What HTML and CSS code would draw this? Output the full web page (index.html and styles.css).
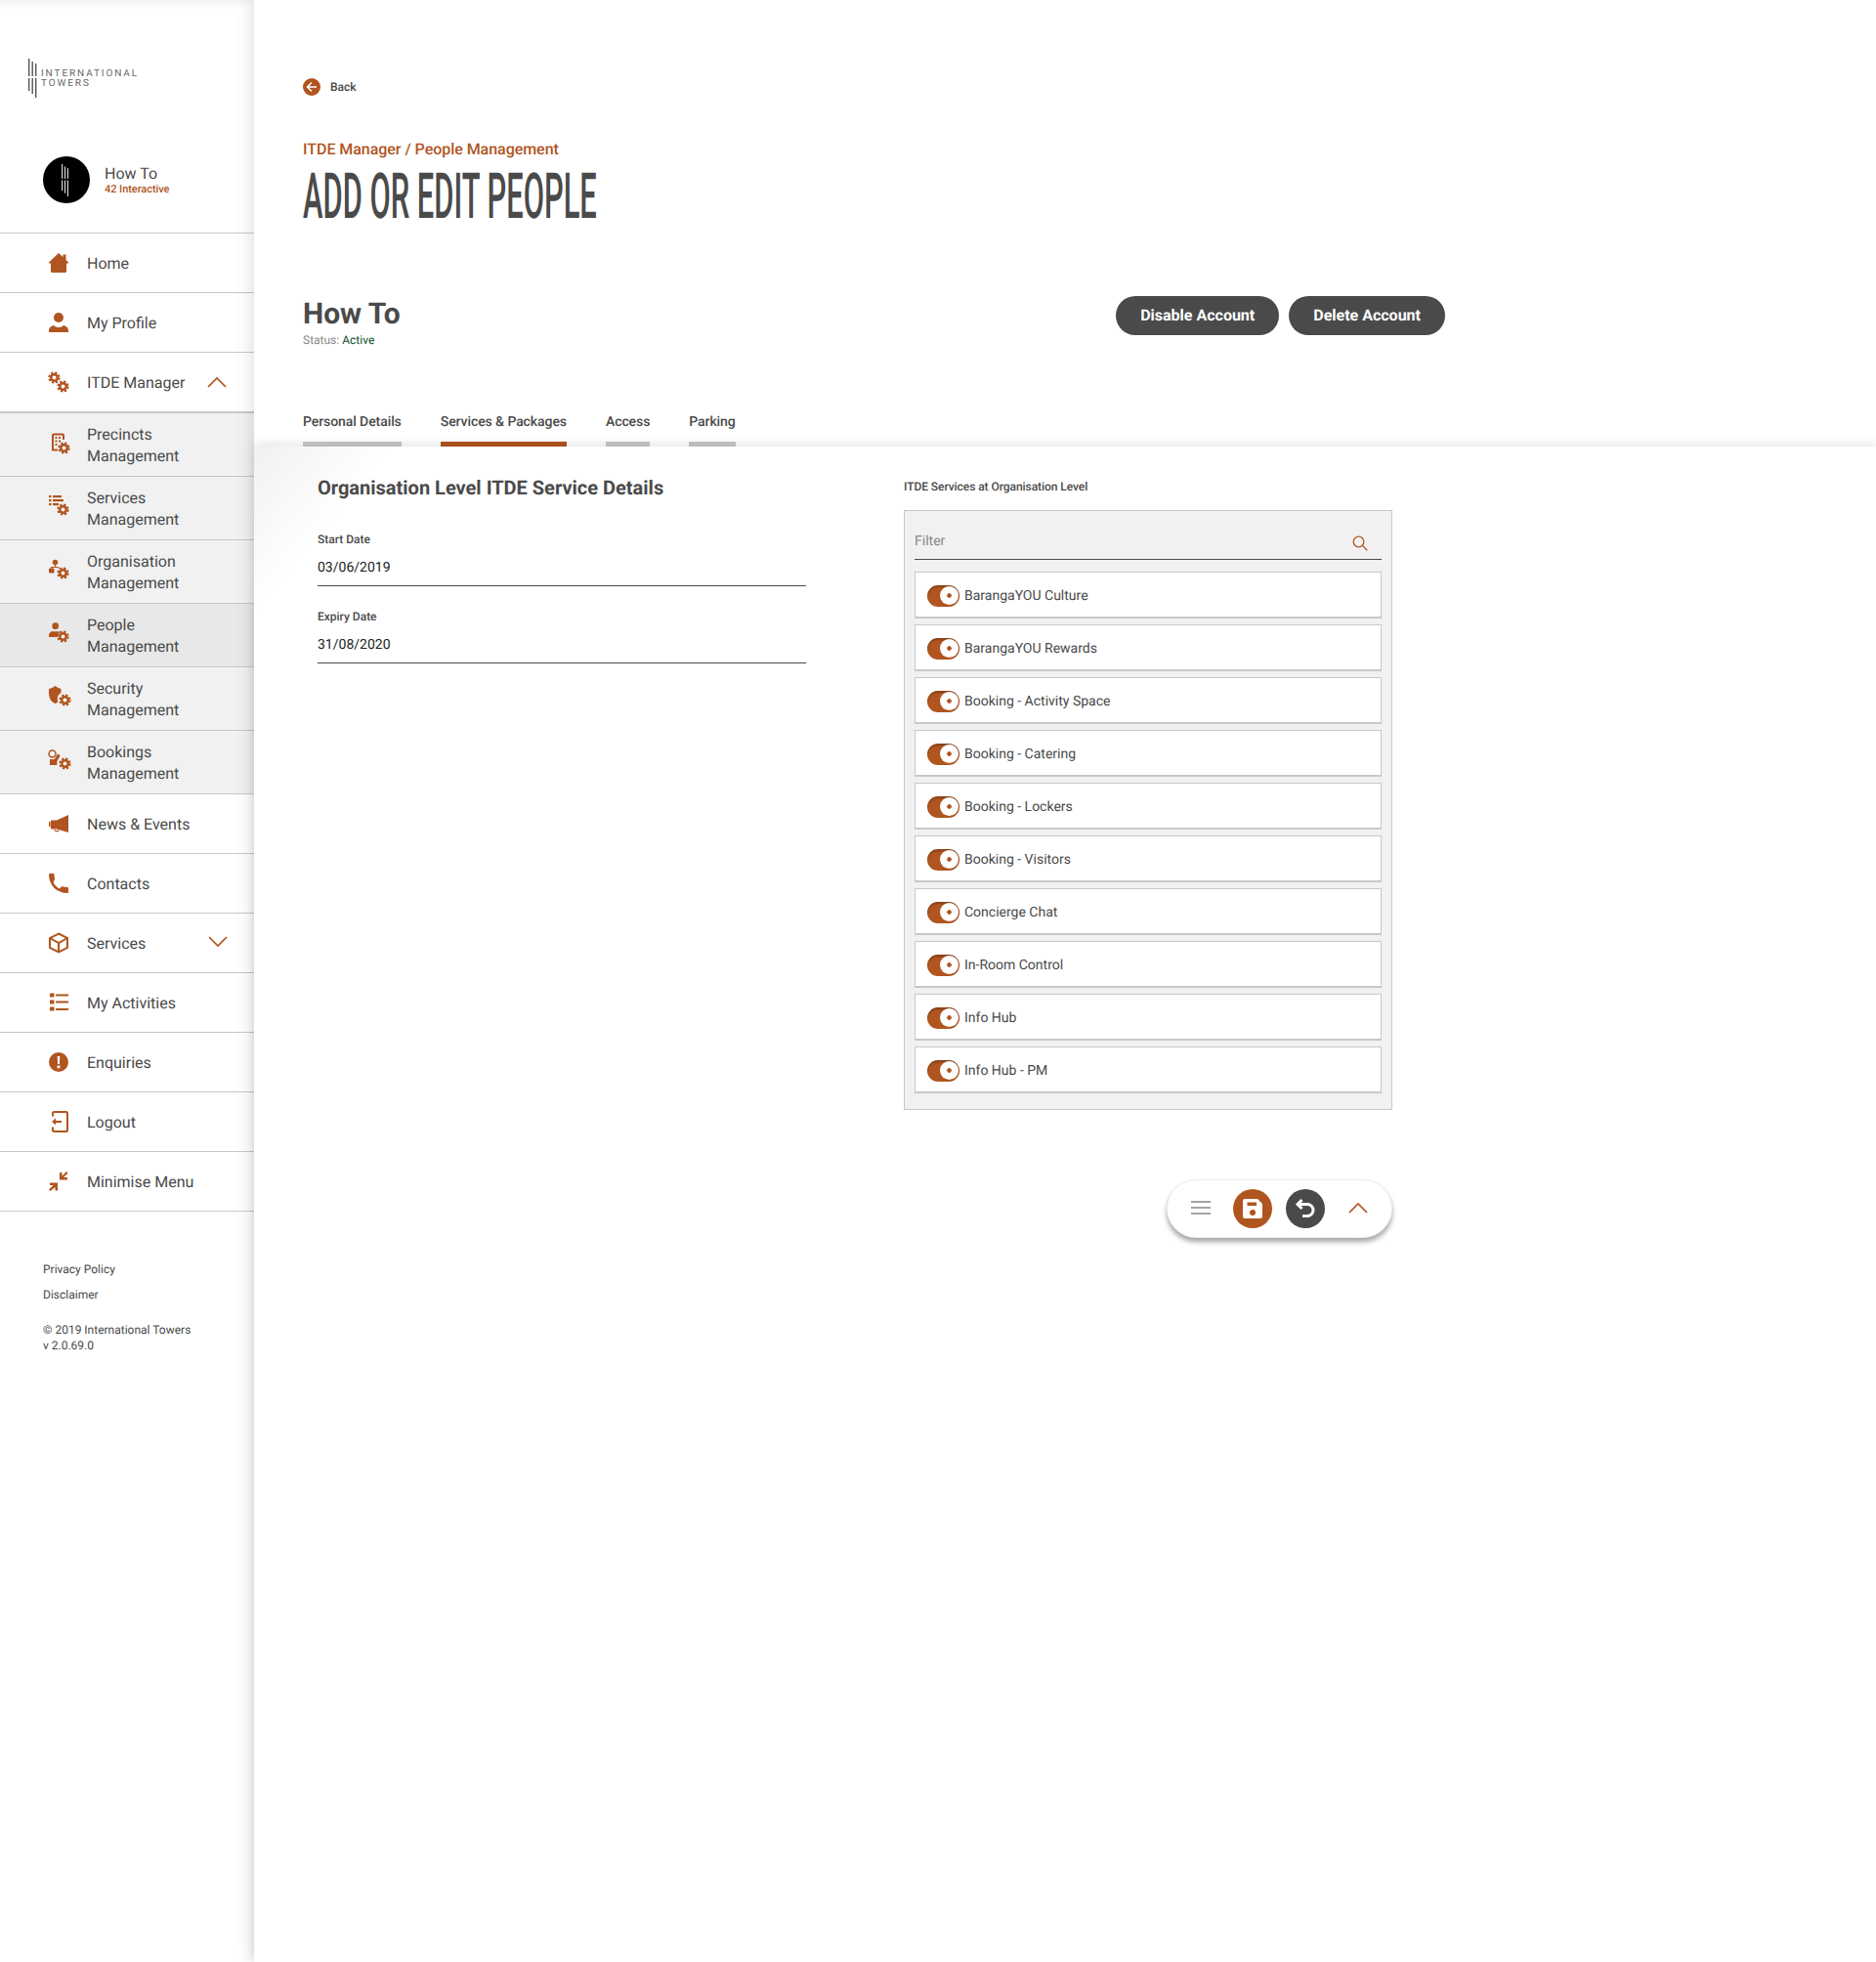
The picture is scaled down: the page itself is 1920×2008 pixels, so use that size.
FILE: index.html
```html
<!DOCTYPE html>
<html lang="en">
<head>
<meta charset="utf-8">
<title>Add or Edit People</title>
<link rel="stylesheet" href="styles.css">
</head>
<body>
<svg class="defs" width="0" height="0" aria-hidden="true">
  <symbol id="gear" viewBox="0 0 16 16">
    <circle cx="8" cy="8" r="4" fill="none" stroke="currentColor" stroke-width="3"/>
    <circle cx="8" cy="8" r="6.2" fill="none" stroke="currentColor" stroke-width="2.6" stroke-dasharray="2.9 1.97"/>
  </symbol>
  <symbol id="bars" viewBox="0 0 12 40">
    <rect x="0" y="0" width="1.4" height="18"/><rect x="0" y="20" width="1.4" height="13"/>
    <rect x="3.5" y="3" width="1.4" height="15"/><rect x="3.5" y="20" width="1.4" height="16"/>
    <rect x="7" y="5" width="1.4" height="13"/><rect x="7" y="20" width="1.4" height="20"/>
  </symbol>
</svg>
<div class="page">
  <aside class="sidebar">
    <header class="brand">
      <div class="logo">
        <svg class="logo-bars" viewBox="0 0 12 40"><use href="#bars"/></svg>
        <div class="logo-text"><span>INTERNATIONAL</span><span>TOWERS</span></div>
      </div>
      <div class="user">
        <div class="avatar"><svg class="avatar-bars" viewBox="0 0 12 40"><use href="#bars"/></svg></div>
        <div><div class="user-name">How To</div><div class="user-org">42 Interactive</div></div>
      </div>
    </header>
    <nav>
      <a class="row"><svg class="ic" viewBox="0 0 24 24"><path d="M12 2l4.500 4V3.500h3V9l2.500 2.500v1h-2v8a1.500 1.500 0 0 1-1.500 1.500h-13A1.500 1.500 0 0 1 4 20.500v-8H2v-1z"/></svg><span>Home</span></a>
      <a class="row"><svg class="ic" viewBox="0 0 24 24"><circle cx="12" cy="7" r="5"/><path d="M2 22v-1.500c0-3 2.500-5 5-5.500 1.500 1.500 3 2 5 2s3.500-.5 5-2c2.500.5 5 2.500 5 5.500V22z"/></svg><span>My Profile</span></a>
      <a class="row row-open"><svg class="ic" viewBox="0 0 24 24"><use href="#gear" x="1" y="1" width="13" height="13"/><use href="#gear" x="10" y="10" width="13" height="13"/></svg><span>ITDE Manager</span><svg class="chev" viewBox="0 0 20 12"><path d="M1 11l9-9 9 9"/></svg></a>
      <div class="sub">
        <a class="subrow"><svg class="ic" viewBox="0 0 24 24"><path class="line" d="M11 18.500H6V3.500a1 1 0 0 1 1-1h9a1 1 0 0 1 1 1V8"/><path d="M8.500 5h2v2h-2zM12 5h2v2h-2zM8.500 8.500h2v2h-2zM12 8.500h2v2h-2zM8.500 12h2v2h-2z"/><use href="#gear" x="11" y="10" width="13" height="13"/></svg><span>Precincts<br>Management</span></a>
        <a class="subrow"><svg class="ic" viewBox="0 0 24 24"><path d="M2 0h2.500v2.200H2zM6 0h9v2.200H6zM2 4h2.500v2.200H2zM6 4h11v2.200H6zM2 8h2.500v2.200H2zM6 8h6v2.200H6z"/><use href="#gear" x="10" y="8" width="13" height="13"/></svg><span>Services<br>Management</span></a>
        <a class="subrow"><svg class="ic" viewBox="0 0 24 24"><circle cx="8.500" cy="3.500" r="2.800"/><rect x="2" y="9.500" width="5.500" height="5" rx="1"/><path class="thin" d="M8.500 6v2.500M4.500 9.500v-1h7l1 1.500"/><use href="#gear" x="10" y="8" width="13" height="13"/></svg><span>Organisation<br>Management</span></a>
        <a class="subrow"><svg class="ic" viewBox="0 0 24 24"><circle cx="8.700" cy="3.700" r="3.400"/><path d="M2 15v-2c0-2 2-3.800 3.500-3.800h6c.8 0 1.500.2 2 .6a7 7 0 0 0-2.500 5.200z"/><use href="#gear" x="10" y="8" width="13" height="13"/></svg><span>People<br>Management</span></a>
        <a class="subrow"><svg class="ic" viewBox="0 0 24 24"><path d="M2 3c2.500-.5 4.500-1.500 6.500-3 2 1.500 4 2.500 6 3v4a7 7 0 0 0-3 9.500c-.8.600-1.800 1-3 1.500C4 16.500 2 12 2 7z"/><use href="#gear" x="12" y="8" width="13" height="13"/></svg><span>Security<br>Management</span></a>
        <a class="subrow"><svg class="ic" viewBox="0 0 24 24"><circle class="line-thin" cx="5.500" cy="4.500" r="3.500"/><path d="M3 10c2 0 4 .5 5-.5l3-5c1 .5 2 1 2.500 2l-1.500 3a7 7 0 0 0-1.500 6.500H3z"/><use href="#gear" x="12" y="8" width="13" height="13"/></svg><span>Bookings<br>Management</span></a>
      </div>
      <a class="row"><svg class="ic" viewBox="0 0 24 24"><path d="M22 3v18l-12-3.500H4v-9h6zM2 10h1.500v5H2z"/><path class="thin" d="M8 18c0 2 3.500 2.500 4 .5"/></svg><span>News &amp; Events</span></a>
      <a class="row"><svg class="ic" viewBox="0 0 24 24"><path d="M6.600 11.200c1.500 2.800 3.400 4.700 6.200 6.200l2-1.900c.3-.3.700-.4 1-.2 1.200.4 3 .7 5 .7.600 0 1.200.5 1.200 1v4c0 .6-.5 1-1 1C10 22 2 14 2 3c0-.6.400-1 1-1h3.500c.6 0 1 .4 1 1 0 1.500.2 3 .6 4.200.1.300 0 .7-.3 1z"/></svg><span>Contacts</span></a>
      <a class="row"><svg class="ic" viewBox="0 0 24 24"><path class="line" d="M12 2.500L21 7v10l-9 4.500L3 17V7zM3 7l9 5 9-5M12 12v9.500"/></svg><span>Services</span><svg class="chev chev-down" viewBox="0 0 20 12"><path d="M1 1l9 9 9-9"/></svg></a>
      <a class="row"><svg class="ic" viewBox="0 0 24 24"><path d="M3 2.500h4.500v4H3zM9 3.500h13v2H9zM3 9.500h4.500v4H3zM9 10.500h13v2H9zM3 16.500h4.500v4H3zM9 18h13v2H9z"/></svg><span>My Activities</span></a>
      <a class="row"><svg class="ic" viewBox="0 0 24 24"><circle cx="12" cy="12" r="10"/><path class="cut" d="M10.700 6h2.600l-.4 8h-1.800zM10.600 15.500h2.800v2.800h-2.800z"/></svg><span>Enquiries</span></a>
      <a class="row"><svg class="ic" viewBox="0 0 24 24"><path class="line" d="M6 6.500V3.500A1.500 1.500 0 0 1 7.500 2h12A1.500 1.500 0 0 1 21 3.500v17a1.500 1.500 0 0 1-1.500 1.500h-12A1.500 1.500 0 0 1 6 20.500v-3"/><path d="M5 12l4-3.500V11h6v2H9v2.500z"/></svg><span>Logout</span></a>
      <a class="row"><svg class="ic" viewBox="0 0 24 24"><path d="M20 2l1.500 1.500-4.500 4.500h4v2.500h-8V3h2.500v3.500zM3.500 22L2 20.500 6.500 16H3v-2.500h8v8H8.500V18z"/></svg><span>Minimise Menu</span></a>
    </nav>
    <footer class="legal">
      <div>Privacy Policy</div>
      <div class="legal-gap">Disclaimer</div>
      <div class="legal-copy">© 2019 International Towers</div>
      <div>v 2.0.69.0</div>
    </footer>
  </aside>
  <main class="main">
    <section class="head">
      <a class="back"><svg class="back-ic" viewBox="0 0 18 18"><circle cx="9" cy="9" r="9"/><path d="M9 4.500L4.500 9 9 13.500M4.500 9H14"/></svg><span>Back</span></a>
      <div class="crumb">ITDE Manager / People Management</div>
      <h1 class="title"><span>ADD OR EDIT PEOPLE</span></h1>
      <div class="person">
        <div>
          <h2 class="person-name">How To</h2>
          <div class="status">Status: <b>Active</b></div>
        </div>
        <div class="actions"><a class="btn">Disable Account</a><a class="btn">Delete Account</a></div>
      </div>
      <div class="tabs">
        <a class="tab">Personal Details</a>
        <a class="tab tab-on">Services &amp; Packages</a>
        <a class="tab">Access</a>
        <a class="tab">Parking</a>
      </div>
    </section>
    <section class="panel">
      <div class="col">
        <h3 class="section-title">Organisation Level ITDE Service Details</h3>
        <div class="field"><label>Start Date</label><div class="value">03/06/2019</div></div>
        <div class="field"><label>Expiry Date</label><div class="value">31/08/2020</div></div>
      </div>
      <div class="col">
        <div class="list-title">ITDE Services at Organisation Level</div>
        <div class="box">
          <div class="filter"><span>Filter</span><svg class="search" viewBox="0 0 16 16"><circle cx="6.500" cy="6.500" r="5.300"/><path d="M10.500 10.500l4.800 4.800"/></svg></div>
          <div class="items">
            <div class="item"><i class="toggle"><i class="knob"></i></i>BarangaYOU Culture</div>
            <div class="item"><i class="toggle"><i class="knob"></i></i>BarangaYOU Rewards</div>
            <div class="item"><i class="toggle"><i class="knob"></i></i>Booking - Activity Space</div>
            <div class="item"><i class="toggle"><i class="knob"></i></i>Booking - Catering</div>
            <div class="item"><i class="toggle"><i class="knob"></i></i>Booking - Lockers</div>
            <div class="item"><i class="toggle"><i class="knob"></i></i>Booking - Visitors</div>
            <div class="item"><i class="toggle"><i class="knob"></i></i>Concierge Chat</div>
            <div class="item"><i class="toggle"><i class="knob"></i></i>In-Room Control</div>
            <div class="item"><i class="toggle"><i class="knob"></i></i>Info Hub</div>
            <div class="item"><i class="toggle"><i class="knob"></i></i>Info Hub - PM</div>
          </div>
        </div>
        <div class="fab-wrap">
          <div class="fab">
            <svg class="burger" viewBox="0 0 20 16"><path d="M0 2h20M0 8h20M0 14h20"/></svg>
            <span class="circle circle-save"><svg class="save" viewBox="0 0 24 24"><path d="M4 2h13l5 5v13a2 2 0 0 1-2 2H4a2 2 0 0 1-2-2V4a2 2 0 0 1 2-2z"/><path class="hole" d="M6.500 5.500h9.500V9H6.500z"/><circle class="hole" cx="12" cy="16" r="3"/></svg></span>
            <span class="circle circle-undo"><svg class="undo" viewBox="0 0 24 24"><path d="M8.500 3L4 7.500 8.500 12M4.500 7.500H14a6 6 0 0 1 0 12H9"/></svg></span>
            <svg class="fab-chev" viewBox="0 0 20 12"><path d="M1 11l9-9 9 9"/></svg>
          </div>
        </div>
      </div>
    </section>
  </main>
</div>
</body>
</html>
```
FILE: styles.css
```css
* { box-sizing: border-box; }
html, body { margin: 0; padding: 0; background: #fff; }
body { font-family: Roboto, "Liberation Sans", sans-serif; color: #4a4a4a; font-size: 14px; text-rendering: geometricPrecision; }
.defs { position: absolute; }
a { color: inherit; text-decoration: none; }
h1, h2, h3 { margin: 0; }
.page { display: flex; width: 1920px; height: 2008px; overflow: hidden; }

/* sidebar */
.sidebar { width: 260px; flex: none; background: #fff; box-shadow: inset 0 10px 8px -8px rgba(0,0,0,.08); }
.brand { height: 239px; padding: 60px 0 0 29px; border-bottom: 1px solid #c8c8c8; }
.logo { display: flex; align-items: flex-start; height: 40px; }
.logo-bars { width: 12px; height: 40px; fill: #555; flex: none; }
.logo-text { display: flex; flex-direction: column; margin: 11px 0 0 1px; font-size: 10px; line-height: 10px; letter-spacing: 1.9px; color: #666; }
.user { display: flex; align-items: center; margin: 60px 0 0 15px; gap: 15px; }
.avatar { width: 48px; height: 48px; border-radius: 50%; background: #000; display: flex; align-items: center; justify-content: center; }
.avatar-bars { width: 10px; height: 33px; fill: #ddd; }
.user-name { font-size: 16px; line-height: 19px; }
.user-org { font-size: 11px; line-height: 13px; color: #b0551f; font-weight: 500; letter-spacing: -.05px; }
.row { display: flex; align-items: center; height: 61px; padding-left: 48px; border-bottom: 1px solid #c8c8c8; font-size: 16px; position: relative; }
.row-open { border-bottom-width: 0; height: 60px; }
.ic { width: 24px; height: 24px; flex: none; margin-right: 17px; fill: #b0551f; color: #b0551f; overflow: visible; }
.ic .line { fill: none; stroke: #b0551f; stroke-width: 2; }
.ic .thin { fill: none; stroke: #b0551f; stroke-width: 1.2; }
.ic .line-thin { fill: none; stroke: #b0551f; stroke-width: 1.500; }
.ic .cut { fill: #fff; }
.chev { width: 20px; height: 12px; margin-left: 23px; fill: none; stroke: #b0551f; stroke-width: 1.700; }
.chev-down { margin-left: 64px; margin-top: -2px; }
.sub { border-top: 2px solid #c8c8c8; }
.subrow { display: flex; align-items: center; height: 65px; padding-left: 48px; border-bottom: 1px solid #c8c8c8; background: #f1f1f1; font-size: 16px; line-height: 22px; }
.subrow span { margin-top: 2px; }
.subrow .ic { margin-top: -2px; }
.subrow:nth-child(4) { background: #e8e8e8; }
.legal { padding: 51px 0 0 44px; font-size: 12px; line-height: 16px; }
.legal-gap { margin-top: 10px; }
.legal-copy { margin-top: 20px; }

/* main */
.main { flex: 1; display: flex; flex-direction: column; background: #fff; position: relative; box-shadow: 0 0 18px rgba(0,0,0,.16); }
.head { padding: 80px 0 0 50px; }
.back { display: flex; align-items: center; gap: 10px; height: 18px; font-size: 12px; font-weight: 500; }
.back-ic { width: 18px; height: 18px; fill: #b0551f; }
.back-ic path { fill: none; stroke: #fff; stroke-width: 1.500; }
.crumb { margin-top: 45px; font-size: 16px; line-height: 20px; font-weight: 500; color: #b0551f; letter-spacing: -.04px; }
.title { height: 67px; padding-top: 9px; font-size: 65px; line-height: 58px; font-weight: 500; white-space: nowrap; }
.title span { display: inline-block; transform: scaleX(.475); transform-origin: 0 50%; }
.person { display: flex; justify-content: space-between; width: 1169px; margin-top: 74px; }
.person-name { font-size: 30px; line-height: 36px; font-weight: 700; }
.status { font-size: 12px; line-height: 16px; color: #888; }
.status b { font-weight: 400; color: #12522f; }
.actions { display: flex; gap: 10px; margin-top: -1px; }
.btn { height: 40px; line-height: 40px; padding: 0 25px; border-radius: 20px; background: #4a4a4a; color: #fff; font-size: 16px; font-weight: 700; }
.tabs { display: flex; gap: 40px; margin-top: 65px; }
.tab { line-height: 22px; padding-bottom: 9px; border-bottom: 5px solid #c8c8c8; font-size: 14px; font-weight: 500; letter-spacing: -.08px; }
.tab-on { border-bottom-color: #b0551f; }

/* panel */
.panel { flex: 1; display: flex; gap: 100px; padding: 28px 0 0 65px; position: relative; background: linear-gradient(130deg, #f1f1f1 0, #fff 110px); box-shadow: 0 -3px 10px rgba(0,0,0,.1); }
.col { width: 500px; }
.section-title { font-size: 20px; line-height: 28px; font-weight: 700; margin-bottom: 31px; }
.field { margin-bottom: 23px; padding-bottom: 8px; border-bottom: 1px solid #4a4a4a; }
.field label { display: block; font-size: 12px; line-height: 16px; font-weight: 500; margin-bottom: 11px; }
.value { font-size: 14px; line-height: 20px; color: #222; }
.list-title { margin-top: 5px; font-size: 12px; line-height: 16px; font-weight: 500; margin-bottom: 16px; letter-spacing: -.06px; }
.box { border: 1px solid #c8c8c8; background: #f1f1f1; padding: 0 10px 16px; }
.filter { display: flex; align-items: center; justify-content: space-between; height: 50px; padding: 12px 14px 0 0; border-bottom: 1px solid #4a4a4a; color: #888; font-size: 14px; }
.search { width: 16px; height: 16px; margin-top: 4px; fill: none; stroke: #b0551f; stroke-width: 1.300; }
.items { display: flex; flex-direction: column; gap: 6px; margin-top: 12px; }
.item { display: flex; align-items: center; height: 48px; padding: 2px 0 0 12px; gap: 5px; background: #fff; border: 1px solid #c8c8c8; border-bottom-width: 2px; font-size: 14px; }
.toggle { display: flex; align-items: center; justify-content: flex-end; width: 33px; height: 22px; padding-right: 1px; border-radius: 11px; background: #b0551f; box-shadow: inset 0 2px 2px rgba(0,0,0,.25); }
.knob { display: block; width: 19px; height: 19px; border-radius: 50%; background: radial-gradient(circle, #b0551f 0, #b0551f 2px, #fff 2.5px); }
.fab-wrap { display: flex; justify-content: flex-end; margin-top: 71px; }
.fab { display: flex; align-items: center; width: 231px; height: 60px; padding-left: 24px; border-radius: 30px; background: #fff; border: 1px solid #eee; box-shadow: 0 4px 5px rgba(0,0,0,.35); }
.burger { width: 20px; height: 16px; fill: none; stroke: #888; stroke-width: 1.700; margin: -2px 23px 0 0; }
.circle { display: flex; align-items: center; justify-content: center; width: 40px; height: 40px; border-radius: 50%; }
.circle-save { background: #b0551f; margin-right: 14px; }
.circle-undo { background: #4a4a4a; margin-right: 24px; }
.save { width: 24px; height: 24px; fill: #fff; }
.save .hole { fill: #b0551f; }
.undo { width: 24px; height: 24px; fill: none; stroke: #fff; stroke-width: 3; }
.fab-chev { width: 20px; height: 12px; margin-top: -2px; fill: none; stroke: #b0551f; stroke-width: 1.700; }
```
